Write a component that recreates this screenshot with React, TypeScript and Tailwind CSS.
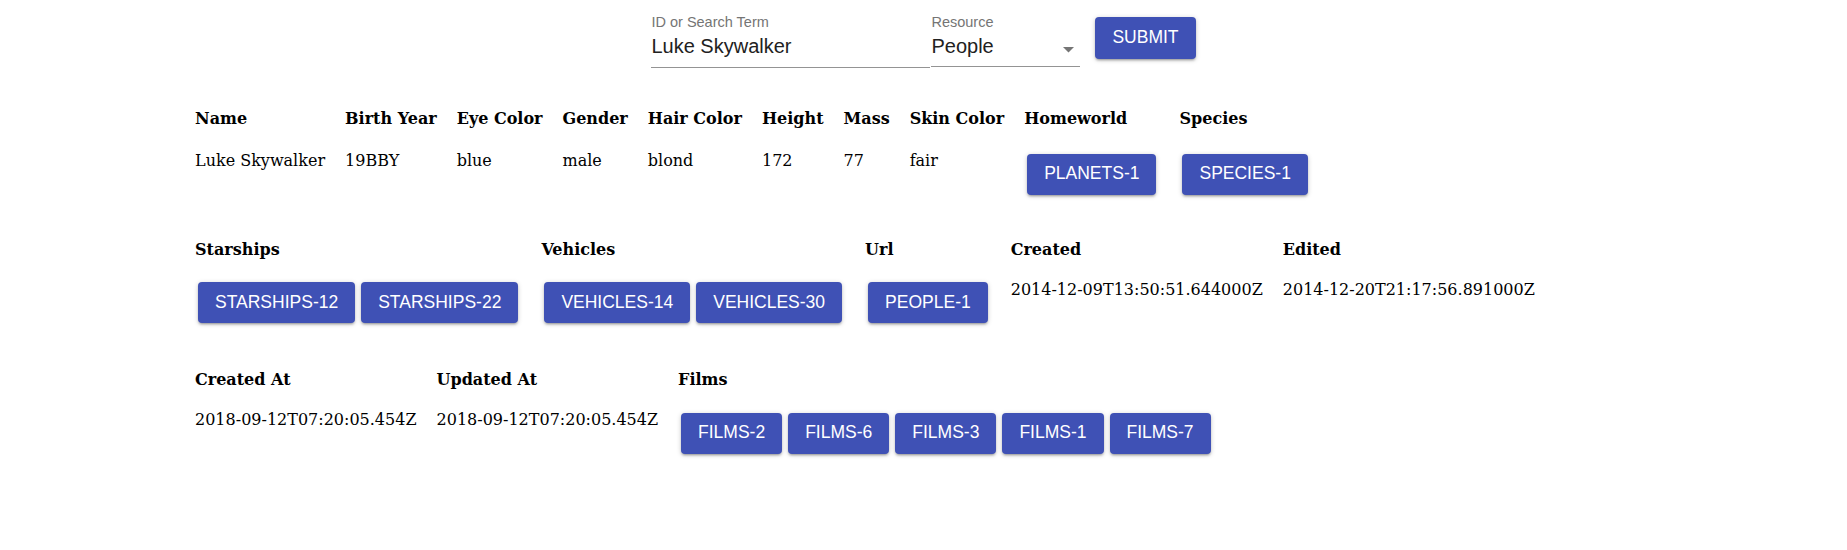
import React from "react"

const shadow =
  "shadow-[0px_1px_5px_0px_rgba(0,0,0,0.2),0px_2px_2px_0px_rgba(0,0,0,0.14),0px_3px_1px_-2px_rgba(0,0,0,0.12)]"

function LinkButton({ label }: { label: string }) {
  return (
    <button
      type="button"
      className={`mx-[3px] mt-[2.5px] mb-[2px] inline-flex h-[41px] shrink-0 items-center justify-center rounded-[4px] bg-[#3f51b5] px-[17px] font-[family-name:'Liberation_Sans',Arial,sans-serif] text-[17.5px] font-normal uppercase leading-none text-white ${shadow}`}
    >
      {label}
    </button>
  )
}

type Cell = { title: string; value?: string; links?: string[] }

function DataTable({ cells, headPad, className }: { cells: Cell[]; headPad: string; className: string }) {
  return (
    <table className={`border-collapse font-[family-name:'DejaVu_Serif',serif] text-[16px] leading-[19px] text-black ${className}`}>
      <thead>
        <tr>
          {cells.map((c) => (
            <th key={c.title} className={`px-[10px] pt-0 text-left align-top font-bold ${headPad}`}>
              {c.title}
            </th>
          ))}
        </tr>
      </thead>
      <tbody>
        <tr>
          {cells.map((c) => (
            <td key={c.title} className="px-[10px] py-0 text-left align-top whitespace-nowrap">
              {c.links ? (
                <div className="flex">
                  {c.links.map((l) => (
                    <LinkButton key={l} label={l} />
                  ))}
                </div>
              ) : (
                c.value
              )}
            </td>
          ))}
        </tr>
      </tbody>
    </table>
  )
}

const person: Cell[] = [
  { title: "Name", value: "Luke Skywalker" },
  { title: "Birth Year", value: "19BBY" },
  { title: "Eye Color", value: "blue" },
  { title: "Gender", value: "male" },
  { title: "Hair Color", value: "blond" },
  { title: "Height", value: "172" },
  { title: "Mass", value: "77" },
  { title: "Skin Color", value: "fair" },
  { title: "Homeworld", links: ["planets-1"] },
  { title: "Species", links: ["species-1"] },
]

const relations: Cell[] = [
  { title: "Starships", links: ["starships-12", "starships-22"] },
  { title: "Vehicles", links: ["vehicles-14", "vehicles-30"] },
  { title: "Url", links: ["people-1"] },
  { title: "Created", value: "2014-12-09T13:50:51.644000Z" },
  { title: "Edited", value: "2014-12-20T21:17:56.891000Z" },
]

const meta: Cell[] = [
  { title: "Created At", value: "2018-09-12T07:20:05.454Z" },
  { title: "Updated At", value: "2018-09-12T07:20:05.454Z" },
  { title: "Films", links: ["films-2", "films-6", "films-3", "films-1", "films-7"] },
]

export default function App() {
  return (
    <div className="h-[550px] w-full bg-white">
      {/* Search form */}
      <div className="flex h-[70px] items-start justify-center font-[family-name:'Liberation_Sans',Arial,sans-serif]">
        <div className="w-[279px] pt-[13px]">
          <div className="text-[14.5px] leading-[18px] text-[#757575]">ID or Search Term</div>
          <div className="mt-[3px] border-b border-[#949494] pb-[9px] text-[20px] leading-[24px] text-[#212121]">
            Luke Skywalker
          </div>
        </div>
        <div className="ml-px w-[149px] pt-[13px]">
          <div className="text-[14.5px] leading-[18px] text-[#757575]">Resource</div>
          <div className="relative mt-[3px] border-b border-[#949494] pb-[8px] text-[20px] leading-[24px] text-[#212121]">
            People
            <svg className="absolute right-[6px] top-[13px]" width="11" height="6" viewBox="0 0 11 6">
              <path d="M0 0l5.5 5.5L11 0z" fill="#757575" />
            </svg>
          </div>
        </div>
        <button
          type="button"
          className={`ml-[15px] mt-[17px] inline-flex h-[42px] items-center rounded-[4px] bg-[#3f51b5] px-[17px] text-[17.5px] font-normal uppercase leading-none text-white ${shadow}`}
        >
          Submit
        </button>
      </div>

      {/* Result tables */}
      <div className="pl-[185px]">
        <DataTable cells={person} headPad="pb-[23px]" className="mt-[39px]" />
        <DataTable cells={relations} headPad="pb-[21px]" className="mt-[43px]" />
        <DataTable cells={meta} headPad="pb-[21px]" className="mt-[45px]" />
      </div>
    </div>
  )
}
